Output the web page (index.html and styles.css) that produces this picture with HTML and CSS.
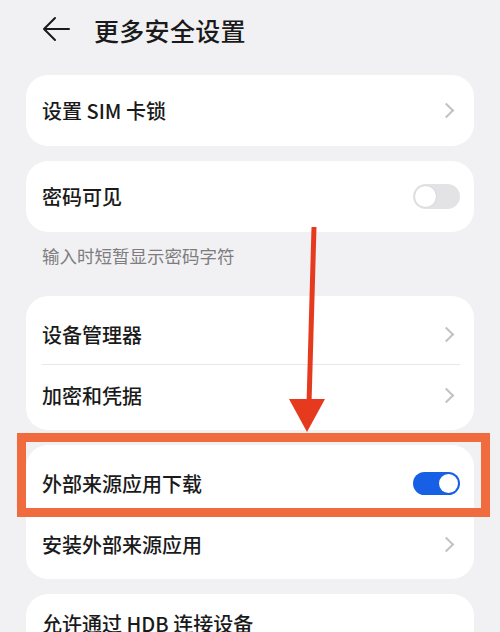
FILE: index.html
```html
<!DOCTYPE html>
<html lang="zh-CN">
<head>
<meta charset="utf-8">
<title>更多安全设置</title>
<link rel="stylesheet" href="styles.css">
</head>
<body>
<div class="page">
  <header class="header">
    <svg class="back" width="28" height="26" viewBox="0 0 28 26">
      <path d="M13 2 L2 13 L13 24 M2 13 H27" fill="none" stroke="#1a1a1a" stroke-width="2" stroke-linecap="round" stroke-linejoin="round"/>
    </svg>
    <h1 class="title">更多安全设置</h1>
  </header>

  <section class="card">
    <div class="row"><span class="label">设置 SIM 卡锁</span><span class="chev"></span></div>
  </section>

  <section class="card card-gap">
    <div class="row"><span class="label">密码可见</span><span class="toggle"></span></div>
  </section>
  <p class="hint">输入时短暂显示密码字符</p>

  <section class="card card-multi">
    <div class="row row-tall"><span class="label">设备管理器</span><span class="chev"></span></div>
    <div class="row row-tall row-last"><span class="label">加密和凭据</span><span class="chev"></span></div>
  </section>

  <section class="card card-multi card-gap">
    <div class="row row-tall"><span class="label">外部来源应用下载</span><span class="toggle on"></span></div>
    <div class="row row-tall row-last"><span class="label">安装外部来源应用</span><span class="chev"></span></div>
  </section>

  <section class="card card-gap">
    <div class="row row-short"><span class="label">允许通过 HDB 连接设备</span></div>
  </section>
</div>

<svg class="annot" width="500" height="632" viewBox="0 0 500 632">
  <rect x="21.5" y="437.5" width="464" height="75" fill="none" stroke="#f06b3e" stroke-width="9"/>
  <line x1="314" y1="227" x2="309" y2="404" stroke="#e63a1f" stroke-width="5"/>
  <polygon points="289,399 325,399 307,432" fill="#e63a1f"/>
</svg>
</body>
</html>
```

FILE: styles.css
```css
html, body {
  margin: 0;
  padding: 0;
}
body {
  background: #f1f1f3;
  font-family: "Noto Sans CJK SC", "Noto Sans", sans-serif;
  color: #1a1a1a;
  width: 500px;
  height: 632px;
  overflow: hidden;
  position: relative;
}
.page {
  padding: 0 26px;
}
.header {
  height: 60px;
  display: flex;
  align-items: center;
  gap: 24px;
  padding-left: 16px;
  margin-bottom: 15px;
}
.back {
  flex: none;
  margin-top: -2px;
}
.title {
  margin: 0;
  font-size: 25px;
  font-weight: 500;
  letter-spacing: 0.3px;
}
.card {
  background: #ffffff;
  border-radius: 22px;
  padding: 0 14px 0 16px;
}
.card-multi {
  padding-top: 8px;
  padding-bottom: 5px;
}
.card-gap {
  margin-top: 15px;
}
.row {
  height: 71px;
  display: flex;
  align-items: center;
  justify-content: space-between;
}
.row-tall {
  height: 60px;
  border-bottom: 1px solid #e8e8ea;
}
.row-last {
  border-bottom: none;
}
.row-short {
  height: 58px;
}
.label {
  font-size: 20px;
  font-weight: 500;
}
.chev {
  width: 9px;
  height: 9px;
  border-top: 2px solid #c2c2c4;
  border-right: 2px solid #c2c2c4;
  transform: rotate(45deg);
  margin-right: 8px;
}
.toggle {
  width: 47px;
  height: 25px;
  border-radius: 13px;
  background: #e3e3e5;
  position: relative;
  flex: none;
}
.toggle::after {
  content: "";
  position: absolute;
  left: 2px;
  top: 2px;
  width: 21px;
  height: 21px;
  border-radius: 50%;
  background: #ffffff;
  box-shadow: 0 0 2px rgba(0,0,0,0.12);
}
.toggle.on {
  background: #1760e6;
  height: 23px;
}
.toggle.on::after {
  left: auto;
  right: 2px;
  top: 2px;
  width: 19px;
  height: 19px;
  box-shadow: none;
}
.hint {
  margin: 0;
  padding: 11px 16px 28px;
  font-size: 17.5px;
  line-height: 25px;
  color: #7d7d80;
}
.annot {
  position: absolute;
  left: 0;
  top: 0;
  pointer-events: none;
}
```
